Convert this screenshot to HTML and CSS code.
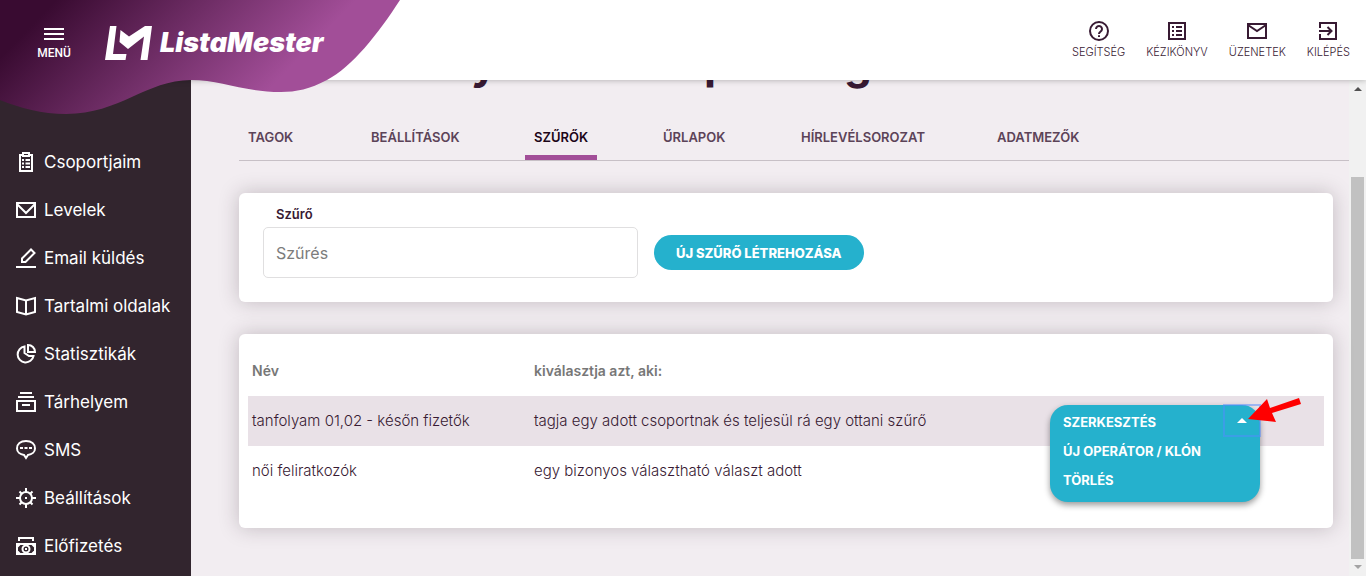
FILE: index.html
```html
<!DOCTYPE html>
<html lang="hu">
<head>
    <meta charset="UTF-8">
    <meta name="viewport" content="width=device-width, initial-scale=1.0">
    <title>ListaMester</title>
    <link rel="stylesheet" href="styles.css">
</head>
<body>
    <header class="header">
        <svg class="wave" viewBox="0 0 400 115" aria-hidden="true">
            <defs>
                <linearGradient id="waveFill" gradientUnits="userSpaceOnUse" x1="27" y1="30" x2="180" y2="180">
                    <stop offset="0" stop-color="#390b31"/>
                    <stop offset="1" stop-color="#a24e98"/>
                </linearGradient>
            </defs>
            <path fill="url(#waveFill)" d="M0 0H400C378 34 352 67 327 80C310 89 296 92 281 92C244 92 220 80 191 80C146 80 120 114 66 114C42 114 20 108 0 100Z"/>
        </svg>
        <button class="menuBtn">
            <svg width="20" height="13" viewBox="0 0 20 13" aria-hidden="true"><path fill="#fff" d="M0 0H20V2H0ZM0 5H20V7H0ZM0 10H20V12H0Z"/></svg>
            MENÜ
        </button>
        <a class="logo" href="#">
            <svg width="47" height="34" viewBox="0 0 47 34" aria-hidden="true">
                <path fill="#fff" d="M5 0H11.500L8 28H21.500L20.500 34H0ZM15.500 4L24 10.500L40 0H47L42.500 34H35.500L39 10.500L23 23L14.500 16Z"/>
            </svg>
            <span>ListaMester</span>
        </a>
        <nav class="topNav">
            <a href="#">
                <svg viewBox="0 0 24 24"><circle cx="12" cy="12" r="9"/><path d="M9 10a3 3 0 1 1 4.500 2.600C12.500 13.200 12 13.800 12 15M12 16.200V18"/></svg>
                SEGÍTSÉG
            </a>
            <a href="#">
                <svg viewBox="0 0 24 24"><path d="M4 4H20V20H4ZM7 8H9M7 12H9M7 16H9M11 8H17M11 12H17M11 16H17"/></svg>
                KÉZIKÖNYV
            </a>
            <a href="#">
                <svg viewBox="0 0 24 24"><path d="M3 5H21V19H3ZM3 6L12 12L21 6"/></svg>
                ÜZENETEK
            </a>
            <a href="#">
                <svg viewBox="0 0 24 24"><path d="M4 9V4H20V20H4V15M3 12H15M11.500 8L15.500 12L11.500 16"/></svg>
                KILÉPÉS
            </a>
        </nav>
    </header>

    <div class="page">
        <nav class="sidebar">
            <a href="#"><svg viewBox="0 0 20 20"><path d="M7 3H4V19H16V3H13M7 1H13V4H7ZM6 8H8M6 11.500H8M6 15H8M9.500 8H14M9.500 11.500H14M9.500 15H14"/></svg>Csoportjaim</a>
            <a href="#"><svg viewBox="0 0 20 20"><path d="M1 3H19V17H1ZM1 4L10 13L19 4"/></svg>Levelek</a>
            <a href="#"><svg viewBox="0 0 20 20"><path d="M0 19H20M6 14V10.500L15 1.500L18.500 5L9.500 14Z"/></svg>Email küldés</a>
            <a href="#"><svg viewBox="0 0 20 20"><path d="M1 2L10 4.500L19 2V16L10 18.500L1 16ZM10 4.500V18.500"/></svg>Tartalmi oldalak</a>
            <a href="#"><svg viewBox="0 0 20 20"><path d="M8.500 2.500A8 8 0 1 0 17.500 12H13L8.500 9ZM12 1V8H19A7 7 0 0 0 12 1Z"/></svg>Statisztikák</a>
            <a href="#"><svg viewBox="0 0 20 20"><path d="M4 1H16M2 5H18M1 9H19V19H1ZM6 13H14"/></svg>Tárhelyem</a>
            <a href="#"><svg viewBox="0 0 20 20"><path d="M8 15C4 14.500 1 12 1 8.500C1 4 4.500 1 10 1S19 4 19 8.500C19 12 16 14.500 12 15L10 18ZM4 8H7M8.500 8H11.500M13 8H16"/></svg>SMS</a>
            <a href="#"><svg viewBox="0 0 20 20"><circle cx="10" cy="10" r="6"/><path d="M10 0V4M10 16V20M0 10H4M16 10H20M3.500 3.500L6 6M14 14L16.500 16.500M16.500 3.500L14 6M6 14L3.500 16.500M9 10H11"/></svg>Beállítások</a>
            <a href="#"><svg viewBox="0 0 20 20"><path d="M3 5V2H17V5M1 8H19V18H1ZM1 11L4 8M16 8L19 11M1 15L4 18M16 18L19 15"/><circle cx="10" cy="13" r="3.500"/><path d="M9 13H11"/></svg>Előfizetés</a>
        </nav>

        <main class="content">
            <h1 class="pageTitle"><span>y</span><span>p</span><span>g</span></h1>
            <nav class="tabs">
                <a href="#">TAGOK</a>
                <a href="#">BEÁLLÍTÁSOK</a>
                <a href="#" class="active">SZŰRŐK</a>
                <a href="#">ŰRLAPOK</a>
                <a href="#">HÍRLEVÉLSOROZAT</a>
                <a href="#">ADATMEZŐK</a>
            </nav>

            <section class="card filterCard">
                <label for="filter">Szűrő</label>
                <div class="filterRow">
                    <input type="text" id="filter" placeholder="Szűrés">
                    <button class="newFilter">ÚJ SZŰRŐ LÉTREHOZÁSA</button>
                </div>
            </section>

            <section class="card tableCard">
                <table>
                    <thead>
                        <tr><th class="nameCol">Név</th><th>kiválasztja azt, aki:</th></tr>
                    </thead>
                    <tbody>
                        <tr class="selected"><td>tanfolyam 01,02 - későn fizetők</td><td>tagja egy adott csoportnak és teljesül rá egy ottani szűrő</td></tr>
                        <tr><td>női feliratkozók</td><td>egy bizonyos választható választ adott</td></tr>
                    </tbody>
                </table>
                <div class="rowMenu">
                    <button>SZERKESZTÉS</button>
                    <button>ÚJ OPERÁTOR / KLÓN</button>
                    <button>TÖRLÉS</button>
                    <button class="toggle" aria-label="Bezárás"></button>
                </div>
                <svg class="pointer" viewBox="0 0 54 26" aria-hidden="true"><path fill="#f00" d="M0 21L19 1L22 10L51 0L53 6L24 15L28 24Z"/></svg>
            </section>
        </main>

        <div class="scrollbar" aria-hidden="true">
            <span class="up"></span>
            <div class="thumb"></div>
            <span class="down"></span>
        </div>
    </div>
</body>
</html>
```
FILE: styles.css
```css
*{
    box-sizing: border-box;
}
body{
    margin: 0;
    height: 100vh;
    display: flex;
    flex-direction: column;
    overflow: hidden;
    font-family: Inter, "Liberation Sans", sans-serif;
    background-color: #f2edf1;
    color: #381a33;
}
a{
    color: inherit;
    text-decoration: none;
}
button{
    font-family: inherit;
    border: none;
    cursor: pointer;
}
svg{
    fill: none;
    stroke-width: 2;
}

/* header */
.header{
    position: relative;
    z-index: 2;
    flex: none;
    height: 80px;
    display: flex;
    align-items: center;
    padding: 0 16px 0 32px;
    background-color: white;
    box-shadow: 0 0 6px rgba(0, 0, 0, 0.3);
}
.wave{
    position: absolute;
    top: 0;
    left: 0;
    width: 400px;
}
.menuBtn{
    position: relative;
    width: 44px;
    padding: 8px 0 0;
    display: flex;
    flex-direction: column;
    align-items: center;
    gap: 4px;
    background: none;
    color: white;
    font-family: Roboto, sans-serif;
    font-size: 12px;
    font-weight: 500;
    line-height: 16px;
}
.logo{
    position: relative;
    margin-left: 29px;
    padding-top: 6px;
    display: flex;
    align-items: center;
    gap: 8px;
    color: white;
    font-family: Inter, sans-serif;
    font-size: 27px;
    font-style: italic;
    font-weight: 900;
    line-height: 34px;
}
.topNav{
    margin-left: auto;
    display: flex;
    gap: 21px;
}
.topNav a{
    display: flex;
    flex-direction: column;
    align-items: center;
    font-size: 11px;
    font-weight: 300;
    line-height: 18px;
}
.topNav svg{
    width: 24px;
    height: 24px;
    stroke: #381a33;
}

.page{
    flex: 1;
    min-height: 0;
    display: flex;
}

/* sidebar */
.sidebar{
    flex: none;
    width: 191px;
    padding: 58px 0 0 16px;
    background-color: #32252e;
}
.sidebar a{
    display: flex;
    align-items: center;
    gap: 8px;
    height: 48px;
    color: white;
    font-size: 17px;
    white-space: nowrap;
}
.sidebar svg{
    width: 20px;
    height: 20px;
    stroke: white;
}

/* content */
.content{
    flex: 1;
    min-width: 0;
    padding-left: 48px;
}
.pageTitle{
    display: grid;
    grid-template-columns: 233px 140px auto;
    margin: -47px 0 0 232px;
    font-size: 44px;
    font-weight: 700;
    line-height: 60px;
}
.tabs{
    display: grid;
    grid-template-columns: 123px 163px 129px 138px 196px auto;
    justify-items: start;
    margin-top: 26px;
    border-bottom: 1px solid #c7c0c6;
    font-size: 13px;
    font-weight: 600;
    line-height: 36px;
    color: #5c4358;
}
.tabs a{
    padding: 0 9px;
    border-bottom: 5px solid transparent;
}
.tabs .active{
    color: #1c0518;
    border-color: #a24e98;
}
.card{
    margin: 32px 16px 0 0;
    border-radius: 6px;
    background-color: white;
    box-shadow: 0 0 20px rgba(50, 37, 46, 0.25);
}
.filterCard{
    padding: 8px 24px 24px;
}
.filterCard label{
    display: block;
    padding: 0 13px;
    font-size: 13px;
    font-weight: 600;
    line-height: 26px;
}
.filterRow{
    display: flex;
    align-items: center;
    gap: 16px;
}
.filterRow input{
    width: 375px;
    height: 51px;
    padding: 0 12px;
    border: 1px solid #e0dfe0;
    border-radius: 5px;
    font-family: inherit;
    font-size: 16px;
}
.filterRow input::placeholder{
    color: #7c7c7c;
}
.newFilter{
    height: 35px;
    padding: 0 22px;
    border-radius: 18px;
    background-color: #25b1cd;
    color: white;
    font-size: 13px;
    font-weight: 800;
}

/* table */
.tableCard{
    position: relative;
    padding: 12px 9px 32px;
}
table{
    width: 100%;
    border-collapse: collapse;
    text-align: left;
}
th, td{
    height: 50px;
    padding: 0 4px 2px;
    font-size: 15px;
    font-weight: 300;
}
th{
    font-size: 14px;
    font-weight: 600;
    color: #777;
}
.nameCol{
    width: 282px;
}
.selected{
    background-color: #e9e1e7;
}
.rowMenu{
    position: absolute;
    top: 71px;
    right: 73px;
    width: 210px;
    height: 97px;
    padding: 2px 13px;
    display: flex;
    flex-direction: column;
    border-radius: 18px;
    background-color: #25b1cd;
    box-shadow: 0 3px 6px rgba(0, 0, 0, 0.4);
}
.rowMenu button{
    height: 29px;
    padding: 0;
    background: none;
    color: white;
    font-size: 13px;
    font-weight: 700;
    text-align: left;
}
.rowMenu .toggle{
    position: absolute;
    top: -1px;
    right: -1px;
    width: 38px;
    height: 33px;
    border: 2px solid rgba(82, 140, 255, 0.5);
}
.toggle::before{
    content: "";
    display: block;
    width: 0;
    margin: 0 auto;
    border: 5px solid transparent;
    border-top: none;
    border-bottom-color: white;
}
.pointer{
    position: absolute;
    top: 64px;
    right: 31px;
    width: 54px;
}

/* scrollbar */
.scrollbar{
    flex: none;
    width: 17px;
    display: flex;
    flex-direction: column;
    align-items: center;
    padding: 7px 0;
    background-color: #f1f1f1;
}
.up, .down{
    border: 4px solid transparent;
}
.up{
    border-top: none;
    border-bottom-color: #505050;
}
.down{
    border-bottom: none;
    border-top-color: #a3a3a3;
}
.thumb{
    flex: 1;
    width: 13px;
    margin: 86px 0 6px;
    background-color: #c1c1c1;
}
```
